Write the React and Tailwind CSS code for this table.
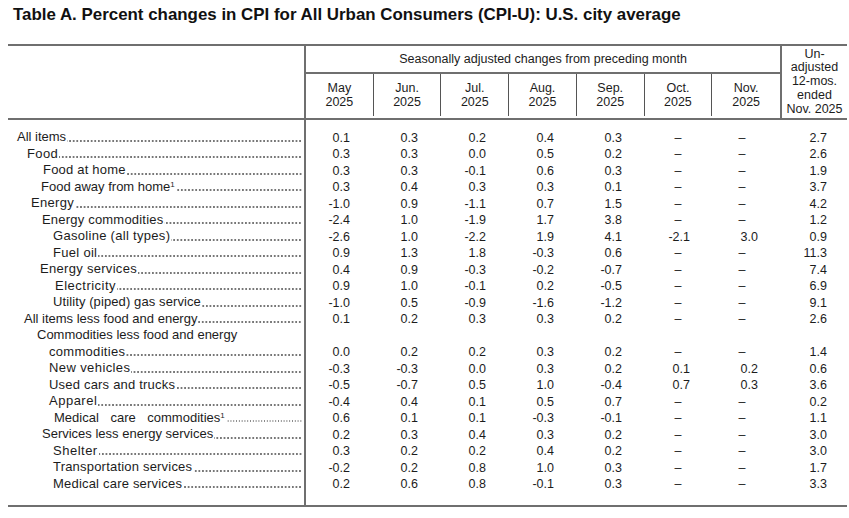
const months = [
  ['May', '2025'],
  ['Jun.', '2025'],
  ['Jul.', '2025'],
  ['Aug.', '2025'],
  ['Sep.', '2025'],
  ['Oct.', '2025'],
  ['Nov.', '2025'],
]

// pl = indent of the label, tr = letter spacing seen in the print
const rows = [
  { label: 'All items', pl: 'pl-[9px]', v: ['0.1', '0.3', '0.2', '0.4', '0.3', '–', '–', '2.7'] },
  { label: 'Food', pl: 'pl-[19px] tracking-[0.4px]', v: ['0.3', '0.3', '0.0', '0.5', '0.2', '–', '–', '2.6'] },
  { label: 'Food at home', pl: 'pl-[35px] tracking-[0.2px]', v: ['0.3', '0.3', '-0.1', '0.6', '0.3', '–', '–', '1.9'] },
  { label: 'Food away from home', sup: true, pl: 'pl-[33px]', v: ['0.3', '0.4', '0.3', '0.3', '0.1', '–', '–', '3.7'] },
  { label: 'Energy', pl: 'pl-[23px] tracking-[0.3px]', v: ['-1.0', '0.9', '-1.1', '0.7', '1.5', '–', '–', '4.2'] },
  { label: 'Energy commodities', pl: 'pl-[34px] tracking-[0.2px]', v: ['-2.4', '1.0', '-1.9', '1.7', '3.8', '–', '–', '1.2'] },
  { label: 'Gasoline (all types)', pl: 'pl-[45px] tracking-[0.3px]', v: ['-2.6', '1.0', '-2.2', '1.9', '4.1', '-2.1', '3.0', '0.9'] },
  { label: 'Fuel oil', pl: 'pl-[45px] tracking-[0.3px]', v: ['0.9', '1.3', '1.8', '-0.3', '0.6', '–', '–', '11.3'] },
  { label: 'Energy services', pl: 'pl-[32px] tracking-[0.3px]', v: ['0.4', '0.9', '-0.3', '-0.2', '-0.7', '–', '–', '7.4'] },
  { label: 'Electricity', pl: 'pl-[47px] tracking-[0.5px]', v: ['0.9', '1.0', '-0.1', '0.2', '-0.5', '–', '–', '6.9'] },
  { label: 'Utility (piped) gas service', pl: 'pl-[45px] tracking-[0.1px]', v: ['-1.0', '0.5', '-0.9', '-1.6', '-1.2', '–', '–', '9.1'] },
  { label: 'All items less food and energy', pl: 'pl-[16px]', v: ['0.1', '0.2', '0.3', '0.3', '0.2', '–', '–', '2.6'] },
  { label: 'Commodities less food and energy', pl: 'pl-[29px]', nodots: true, v: ['', '', '', '', '', '', '', ''] },
  { label: 'commodities', pl: 'pl-[41px] tracking-[0.3px]', v: ['0.0', '0.2', '0.2', '0.3', '0.2', '–', '–', '1.4'] },
  { label: 'New vehicles', pl: 'pl-[41px] tracking-[0.4px]', v: ['-0.3', '-0.3', '0.0', '0.3', '0.2', '0.1', '0.2', '0.6'] },
  { label: 'Used cars and trucks', pl: 'pl-[41px] tracking-[0.2px]', v: ['-0.5', '-0.7', '0.5', '1.0', '-0.4', '0.7', '0.3', '3.6'] },
  { label: 'Apparel', pl: 'pl-[41px] tracking-[0.5px]', v: ['-0.4', '0.4', '0.1', '0.5', '0.7', '–', '–', '0.2'] },
  { label: 'Medical care commodities', sup: true, small: true, pl: 'pl-[46px] [word-spacing:8px]', v: ['0.6', '0.1', '0.1', '-0.3', '-0.1', '–', '–', '1.1'] },
  { label: 'Services less energy services', pl: 'pl-[34px]', v: ['0.2', '0.3', '0.4', '0.3', '0.2', '–', '–', '3.0'] },
  { label: 'Shelter', pl: 'pl-[45px] tracking-[0.5px]', v: ['0.3', '0.2', '0.2', '0.4', '0.2', '–', '–', '3.0'] },
  { label: 'Transportation services', pl: 'pl-[45px] tracking-[0.2px]', v: ['-0.2', '0.2', '0.8', '1.0', '0.3', '–', '–', '1.7'] },
  { label: 'Medical care services', pl: 'pl-[45px] tracking-[0.2px]', v: ['0.2', '0.6', '0.8', '-0.1', '0.3', '–', '–', '3.3'] },
]

// where the dash sits in each column (the print is not centred evenly)
const dashPad = ['pr-[2px]', 'pr-[2px]', 'pr-[2px]', 'pr-[2px]', 'pr-[2px]', 'pr-[4px]', 'pr-[12px]', 'pr-[0px]']

function Cell({ value, i }) {
  const last = i === 7
  if (value === '–') {
    return <div className={`flex items-center justify-center ${dashPad[i]}`}>–</div>
  }
  return (
    <div className={`flex items-center justify-end ${last ? 'pr-[20px]' : 'pr-[24px]'}`}>{value}</div>
  )
}

export default function App() {
  return (
    <div className="w-[849px] h-[518px] bg-white text-[#1c1c1c] font-['Liberation_Sans',Arial,sans-serif] overflow-hidden">
      <h1 className="pl-[13px] pt-[5px] text-[16.9px] leading-[20px] font-bold text-[#111]">
        Table A. Percent changes in CPI for All Urban Consumers (CPI-U): U.S. city average
      </h1>

      <div className="ml-[8px] mt-[19px] w-[839px] border-t-2 border-b-2 border-[#6f6f6f]">
        {/* Header */}
        <div className="grid grid-cols-[298px_476px_65px] border-b-2 border-[#6f6f6f] text-[12.5px]">
          <div className="border-r-2 border-[#6f6f6f]" />
          <div className="flex flex-col border-r-2 border-[#6f6f6f]">
            <div className="h-[28px] flex items-center justify-center border-b-2 border-[#6f6f6f]">
              Seasonally adjusted changes from preceding month
            </div>
            <div className="grid grid-cols-7 h-[42px]">
              {months.map((m, i) => (
                <div
                  key={m[0]}
                  className={`flex flex-col items-center justify-center leading-[14px] ${i < 6 ? 'border-r border-[#555]' : ''}`}
                >
                  <span>{m[0]}</span>
                  <span>{m[1]}</span>
                </div>
              ))}
            </div>
          </div>
          <div className="flex flex-col items-center justify-center leading-[13.8px] text-center h-[72px]">
            <span>Un-</span>
            <span>adjusted</span>
            <span>12-mos.</span>
            <span>ended</span>
            <span className="whitespace-nowrap">Nov. 2025</span>
          </div>
        </div>

        {/* Body */}
        <div className="grid grid-cols-[298px_541px]">
          <div className="border-r-2 border-[#6f6f6f] pt-[8.75px] pb-[13.25px] pr-[2px] text-[13px]">
            {rows.map(r => (
              <div key={r.label} className={`flex items-center h-[16.5px] whitespace-nowrap ${r.pl}`}>
                <span>
                  {r.label}
                  {r.sup && <span className="text-[8px] align-[4px] tracking-normal">1</span>}
                </span>
                {!r.nodots && (
                  <span
                    className={`flex-1 min-w-0 self-end mb-[3.5px] h-[2px] ml-[1px] bg-repeat-x bg-right ${
                      r.small
                        ? 'bg-[radial-gradient(circle,#888_0.6px,transparent_0.8px)] bg-[length:2.8px_2px]'
                        : 'bg-[radial-gradient(circle,#777_0.7px,transparent_0.9px)] bg-[length:3.6px_2px]'
                    }`}
                  />
                )}
              </div>
            ))}
          </div>
          <div className="pt-[8.75px] pb-[13.25px] text-[12.5px]">
            {rows.map(r => (
              <div key={r.label} className="grid grid-cols-[repeat(7,68px)_65px] h-[16.5px]">
                {r.v.map((value, i) => (
                  <Cell key={i} value={value} i={i} />
                ))}
              </div>
            ))}
          </div>
        </div>
      </div>
    </div>
  )
}
